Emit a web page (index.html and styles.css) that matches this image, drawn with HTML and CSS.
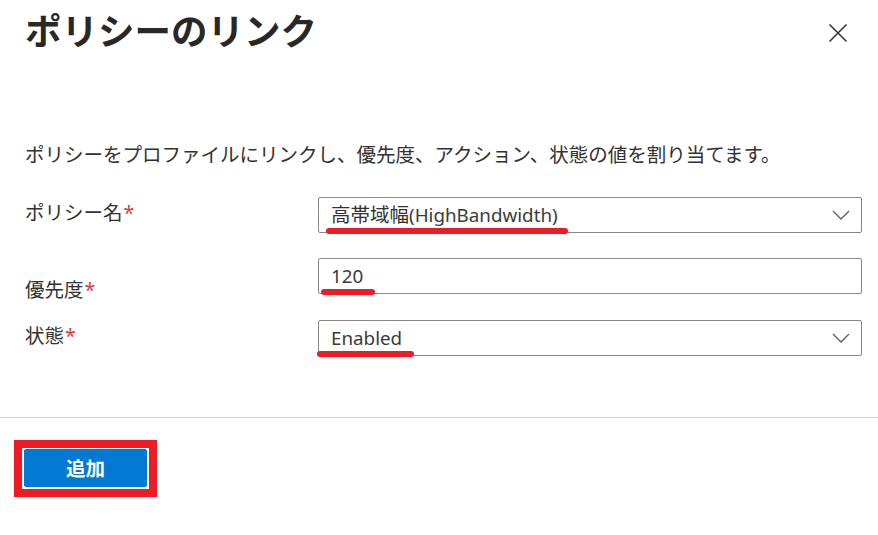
FILE: index.html
```html
<!DOCTYPE html>
<html lang="ja">
<head>
<meta charset="utf-8">
<title>ポリシーのリンク</title>
<link rel="stylesheet" href="styles.css">
</head>
<body>
<div class="panel">
  <header class="head">
    <h1 class="title">ポリシーのリンク</h1>
    <button class="close" aria-label="閉じる">
      <svg width="18" height="18" viewBox="0 0 18 18"><path d="M0.5 0.5 L17.5 17.5 M17.5 0.5 L0.5 17.5" stroke="#323130" stroke-width="1.5" fill="none"/></svg>
    </button>
  </header>
  <p class="desc">ポリシーをプロファイルにリンクし、優先度、アクション、状態の値を割り当てます。</p>
  <div class="form">
    <div class="row row-1">
      <label class="lbl lbl-1">ポリシー名<span class="req">*</span></label>
      <div class="field">
        <span class="value">高帯域幅<span class="latin">(HighBandwidth)</span></span>
        <svg class="chev" width="18" height="10" viewBox="0 0 18 10"><polyline points="1,1 9,9 17,1" stroke="#605e5c" stroke-width="1.3" fill="none"/></svg>
        <span class="mark mark-1"></span>
      </div>
    </div>
    <div class="row row-2">
      <label class="lbl lbl-2">優先度<span class="req">*</span></label>
      <div class="field">
        <span class="value latin">120</span>
        <span class="mark mark-2"></span>
      </div>
    </div>
    <div class="row row-3">
      <label class="lbl lbl-3">状態<span class="req">*</span></label>
      <div class="field">
        <span class="value latin">Enabled</span>
        <svg class="chev" width="18" height="10" viewBox="0 0 18 10"><polyline points="1,1 9,9 17,1" stroke="#605e5c" stroke-width="1.3" fill="none"/></svg>
        <span class="mark mark-3"></span>
      </div>
    </div>
  </div>
</div>
<footer class="foot">
  <div class="highlight">
    <button class="primary">追加</button>
  </div>
</footer>
</body>
</html>
```
FILE: styles.css
```css
* { box-sizing: border-box; }
html, body {
  margin: 0;
  padding: 0;
  background: #ffffff;
}
body {
  width: 878px;
  height: 535px;
  overflow: hidden;
  font-family: "Noto Sans", "Noto Sans CJK JP", sans-serif;
  color: #323130;
  font-size: 19.5px;
}
.panel {
  padding: 0 16px 0 25px;
}
.head {
  display: flex;
  justify-content: space-between;
  align-items: flex-start;
  padding: 6px 15px 0 0;
}
.title {
  margin: 0;
  font-family: "Noto Sans CJK JP", sans-serif;
  font-size: 36.5px;
  line-height: 48px;
  font-weight: 700;
  color: #292827;
}
.close {
  margin-top: 18px;
  padding: 0;
  border: 0;
  background: none;
  width: 18px;
  height: 18px;
  display: block;
}
.close svg { display: block; }
.desc {
  margin: 86px 0 0 0;
  line-height: 28px;
  font-family: "Noto Sans CJK JP", sans-serif;
}
.form {
  margin-top: 29px;
  display: flex;
  flex-direction: column;
}
.row {
  display: grid;
  grid-template-columns: 293px 544px;
  align-items: start;
  height: 36px;
}
.row-2 { margin-top: 25px; }
.row-3 { margin-top: 26px; }
.lbl {
  line-height: 28px;
  font-family: "Noto Sans CJK JP", sans-serif;
}
.lbl-1 { margin-top: 1px; }
.lbl-2 { margin-top: 17px; }
.lbl-3 { margin-top: 1px; }
.req {
  color: #d83b3b;
  font-family: "Noto Sans", sans-serif;
  margin-left: 1px;
}
.field {
  position: relative;
  height: 36px;
  border: 1px solid #8a8886;
  border-radius: 2px;
  display: flex;
  align-items: center;
  justify-content: space-between;
  padding: 0 11px 0 12px;
}
.value {
  line-height: 28px;
  color: #323130;
}
.latin {
  font-size: 18.8px;
  color: #3b3a39;
}
.chev { display: block; }
.mark {
  position: absolute;
  height: 6px;
  top: 30px;
  background: #ed1c24;
  border-radius: 3px;
}
.mark-1 { left: 7px; width: 242px; }
.mark-2 { left: 2px; width: 54px; }
.mark-3 { left: -2px; width: 97px; }
.foot {
  margin-top: 61px;
  border-top: 1px solid #cfcfcf;
  padding: 22px 0 0 14px;
}
.highlight {
  display: inline-block;
  border: 8px solid #ed1c24;
  padding: 1px 2px 2px 2px;
  background: #ffffff;
}
.primary {
  display: block;
  width: 123px;
  height: 38px;
  border: 1px solid #0078d4;
  border-radius: 2px;
  background: #0078d4;
  color: #ffffff;
  font-family: "Noto Sans CJK JP", sans-serif;
  font-size: 19.5px;
  font-weight: 700;
  line-height: 34px;
  padding: 0;
}
```
